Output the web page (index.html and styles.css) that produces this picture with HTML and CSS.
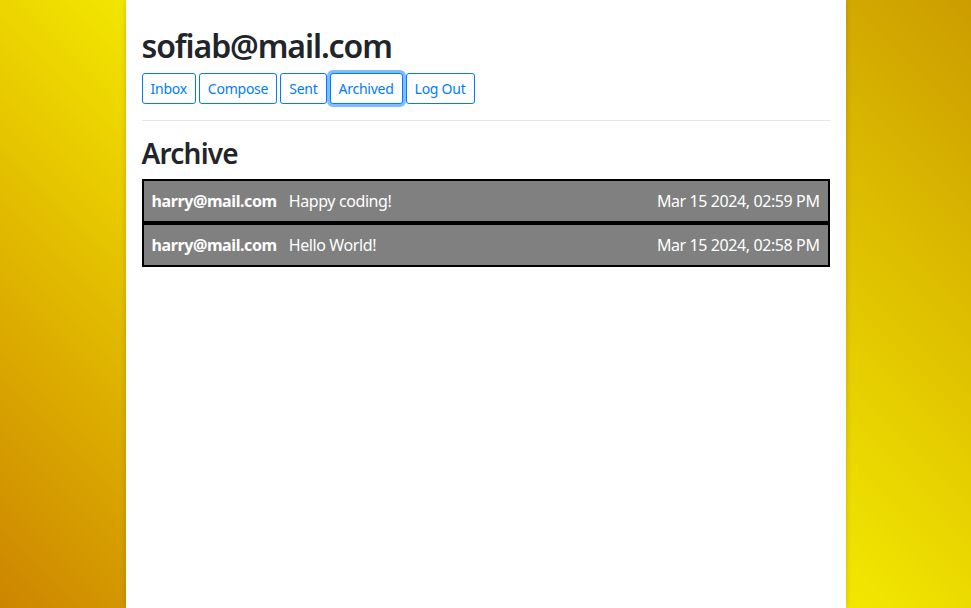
FILE: index.html
```html
<!DOCTYPE html>
<html>
<head>
<meta charset="utf-8">
<link rel="stylesheet" href="styles.css">
</head>
<body>
<div class="container">
  <h2 class="user">sofiab@mail.com</h2>
  <nav class="nav">
    <button class="btn">Inbox</button>
    <button class="btn">Compose</button>
    <button class="btn">Sent</button>
    <button class="btn focus">Archived</button>
    <button class="btn">Log Out</button>
  </nav>
  <hr class="rule">
  <h3 class="title">Archive</h3>
  <div class="mails">
    <div class="mail">
      <span class="sender">harry@mail.com</span>
      <span class="subject">Happy coding!</span>
      <span class="time">Mar 15 2024, 02:59 PM</span>
    </div>
    <div class="mail">
      <span class="sender">harry@mail.com</span>
      <span class="subject">Hello World!</span>
      <span class="time">Mar 15 2024, 02:58 PM</span>
    </div>
  </div>
</div>
</body>
</html>
```
FILE: styles.css
```css
html, body {
  margin: 0;
  height: 100%;
}
body {
  font-family: "Noto Sans", "Open Sans", sans-serif;
  font-size: 16px;
  line-height: 1.5;
  color: #212529;
  background: linear-gradient(45deg, #cc8500 0%, #f6ee00 50%, #cc9c00 100%);
}
.container {
  box-sizing: border-box;
  width: 720px;
  min-height: 100%;
  margin: 0 auto;
  padding: 27px 16px 16px;
  background: #fff;
  box-shadow: 0 0 6px rgba(0, 0, 0, 0.18);
}
.user {
  margin: 0 0 8px;
  font-size: 32px;
  font-weight: 600;
  line-height: 1.2;
  letter-spacing: -1.1px;
}
.nav {
  display: flex;
  gap: 3px;
}
.btn {
  font-family: inherit;
  font-size: 14px;
  line-height: 1.5;
  padding: 4px 8px;
  color: #007bff;
  background: #fff;
  border: 1px solid #007bff;
  border-radius: 3px;
  letter-spacing: -0.25px;
}
.btn.focus {
  box-shadow: 0 0 0 3px rgba(0, 123, 255, 0.5);
}
.rule {
  margin: 16px 0;
  border: 0;
  border-top: 1px solid rgba(0, 0, 0, 0.1);
}
.title {
  margin: 0 0 8px;
  font-size: 28px;
  font-weight: 600;
  line-height: 1.2;
  letter-spacing: -0.8px;
}
.mail {
  display: flex;
  align-items: center;
  padding: 8px;
  border: 2px solid #000;
  background: #808080;
  color: #fff;
  letter-spacing: -0.4px;
}
.sender {
  font-weight: 700;
  margin-right: 12px;
}
.time {
  margin-left: auto;
}
```
